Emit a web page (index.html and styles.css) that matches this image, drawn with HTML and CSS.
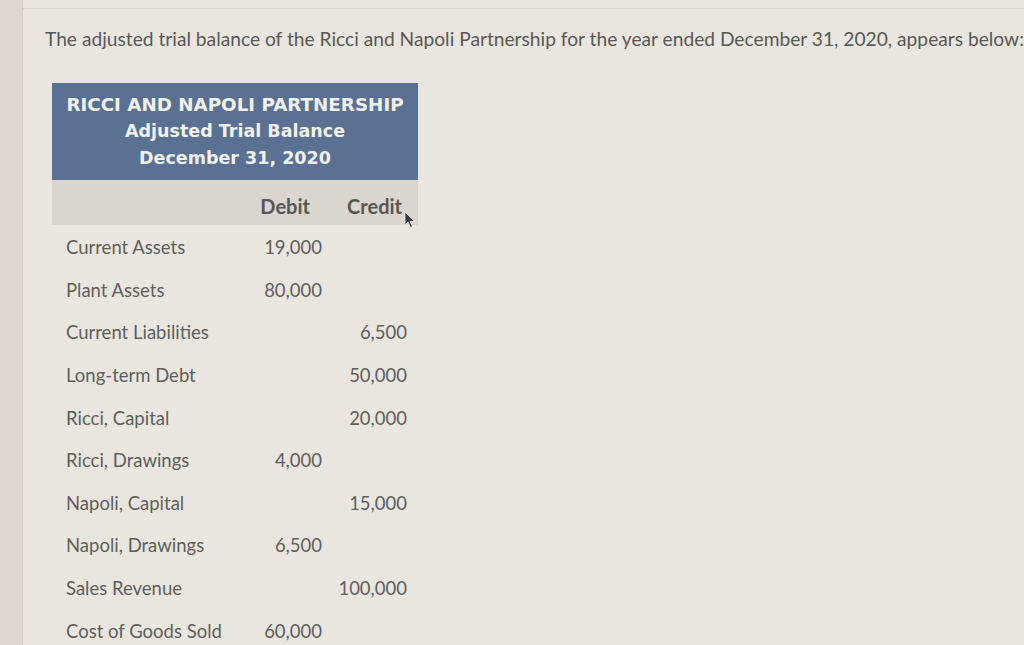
FILE: index.html
```html
<!DOCTYPE html>
<html>
<head>
<meta charset="utf-8">
<link rel="stylesheet" href="styles.css">
</head>
<body>
<div class="screen">
  <div class="strip"></div>
  <main class="content">
    <p class="intro">The adjusted trial balance of the Ricci and Napoli Partnership for the year ended December 31, 2020, appears below:</p>
    <div class="tb">
      <div class="tb-title">
        <div class="t1">RICCI AND NAPOLI PARTNERSHIP</div>
        <div>Adjusted Trial Balance</div>
        <div>December 31, 2020</div>
      </div>
      <div class="tb-head">
        <span></span><span class="num dr">Debit</span><span class="num cr">Credit</span>
        <svg class="cursor" width="12" height="18" viewBox="0 0 12 18"><path d="M1 1 L1 14 L4 11 L6.5 16.5 L8.5 15.5 L6 10.5 L10.5 10.5 Z" fill="#3a3a3a" stroke="#eee" stroke-width="0.8"/></svg>
      </div>
      <div class="tb-body">
        <div class="row"><span>Current Assets</span><span class="num">19,000</span><span class="num cr"></span></div>
        <div class="row"><span>Plant Assets</span><span class="num">80,000</span><span class="num cr"></span></div>
        <div class="row"><span>Current Liabilities</span><span class="num"></span><span class="num cr">6,500</span></div>
        <div class="row"><span>Long-term Debt</span><span class="num"></span><span class="num cr">50,000</span></div>
        <div class="row"><span>Ricci, Capital</span><span class="num"></span><span class="num cr">20,000</span></div>
        <div class="row"><span>Ricci, Drawings</span><span class="num">4,000</span><span class="num cr"></span></div>
        <div class="row"><span>Napoli, Capital</span><span class="num"></span><span class="num cr">15,000</span></div>
        <div class="row"><span>Napoli, Drawings</span><span class="num">6,500</span><span class="num cr"></span></div>
        <div class="row"><span>Sales Revenue</span><span class="num"></span><span class="num cr">100,000</span></div>
        <div class="row"><span>Cost of Goods Sold</span><span class="num">60,000</span><span class="num cr"></span></div>
      </div>
    </div>
  </main>
</div>
</body>
</html>
```

FILE: styles.css
```css
html, body {
  margin: 0;
  padding: 0;
  height: 100%;
  overflow: hidden;
}
body {
  background: #e9e6df;
  font-family: Lato, "Open Sans", sans-serif;
  color: #5a5a58;
}
.screen {
  display: flex;
  height: 645px;
}
.strip {
  width: 22px;
  flex: none;
  background: #dcd8d0;
  border-right: 1px solid #d0ccc4;
}
.content {
  flex: 1;
  border-top: 1px solid #d4d0c8;
  margin-top: 8px;
  padding-left: 22px;
}
.intro {
  margin: 18px 0 0 0;
  font-size: 19.2px;
  line-height: 24px;
  color: #585856;
  white-space: nowrap;
}
.tb {
  width: 366px;
  margin: 32px 0 0 7px;
}
.tb-title {
  background: #5b7194;
  color: #f1f1ee;
  font-family: "DejaVu Sans", Verdana, sans-serif;
  font-weight: bold;
  font-size: 17.5px;
  line-height: 27px;
  text-align: center;
  padding: 8px 0 8px;
  height: 81px;
}
.tb-title .t1 {
  font-size: 18.3px;
}
.tb-head, .row {
  display: grid;
  grid-template-columns: 190px 80px 88px;
  align-items: center;
}
.tb-head {
  position: relative;
  background: #d9d6d0;
  height: 45px;
  padding-top: 6px;
  box-sizing: border-box;
  font-weight: bold;
  font-size: 20px;
  color: #575755;
}
.tb-head .num {
  text-align: right;
}
.tb-head .dr {
  padding-right: 12px;
}
.tb-head .cr {
  padding-right: 8px;
}
.cursor {
  position: absolute;
  left: 352px;
  top: 31px;
}
.tb-body {
  padding-top: 1px;
}
.row {
  height: 42.6px;
  font-size: 18.5px;
  color: #5e5e5c;
}
.row span:first-child {
  padding-left: 14px;
}
.num {
  text-align: right;
}
.row .cr {
  padding-right: 3px;
}
```
